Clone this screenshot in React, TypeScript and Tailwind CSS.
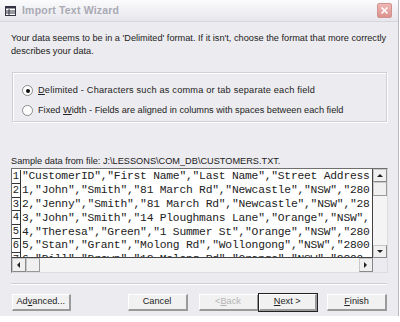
import React from 'react';

const rows = [
  '"CustomerID","First Name","Last Name","Street Address',
  '1,"John","Smith","81 March Rd","Newcastle","NSW","280',
  '2,"Jenny","Smith","81 March Rd","Newcastle","NSW","28',
  '3,"John","Smith","14 Ploughmans Lane","Orange","NSW",',
  '4,"Theresa","Green","1 Summer St","Orange","NSW","280',
  '5,"Stan","Grant","Molong Rd","Wollongong","NSW","2800',
  '6,"Bill","Brown","12 Molong Rd","Orange","NSW","2800',
];

function Radio({ checked }: { checked?: boolean }) {
  return (
    <span className="w-[11px] h-[11px] rounded-full border border-[#8a8a8a] bg-white flex items-center justify-center shrink-0">
      {checked && <span className="w-[4px] h-[4px] rounded-full bg-[#111]" />}
    </span>
  );
}

function Btn({ children, def, disabled }: { children: React.ReactNode; def?: boolean; disabled?: boolean }) {
  return (
    <div
      className={
        'w-[60px] h-[17px] flex items-center justify-center bg-[#f1f1f1] border-t border-l border-t-white border-l-white border-r-2 border-b-2 border-r-[#9a9a9a] border-b-[#9a9a9a] ' +
        (def ? 'outline outline-1 outline-[#222] ' : '') +
        (disabled ? 'text-[#b4b4b4]' : 'text-[#222]')
      }
    >
      {children}
    </div>
  );
}

function Arrow({ dir }: { dir: 'up' | 'down' | 'left' | 'right' }) {
  const pts = {
    up: '1,5 4,2 7,5',
    down: '1,2 4,5 7,2',
    left: '5,1 2,4 5,7',
    right: '2,1 5,4 2,7',
  }[dir];
  return (
    <svg width="8" height="8" viewBox="0 0 8 8">
      <polygon points={pts} fill="#222" />
    </svg>
  );
}

export default function App() {
  return (
    <div className="w-[400px] h-[322px] bg-white overflow-hidden" style={{ fontFamily: '"Liberation Sans", Arial, sans-serif' }}>
      <div className="w-[399px] h-[316px] bg-[#ecebef] border-r border-[#b8b8c0] flex flex-col">
        {/* title bar */}
        <div className="h-[22px] flex items-center pl-[5px] pr-[6px] bg-gradient-to-b from-[#fbfbfd] to-[#e6e6ec] border-b border-[#d6d6de]">
          <svg width="11" height="10" viewBox="0 0 11 10" className="mr-[6px]">
            <rect x="0.5" y="0.5" width="10" height="9" fill="#fff" stroke="#334" />
            <rect x="0.5" y="0.5" width="10" height="2" fill="#334" />
            <line x1="4" y1="3" x2="4" y2="9" stroke="#334" />
            <line x1="1" y1="5" x2="10" y2="5" stroke="#334" />
            <line x1="1" y1="7" x2="10" y2="7" stroke="#334" />
          </svg>
          <span className="text-[10.5px] font-bold text-[#a9a9b3] tracking-[0.2px]">Import Text Wizard</span>
          <div className="ml-auto w-[15px] h-[15px] rounded-[2px] bg-gradient-to-b from-[#efb8b6] to-[#dc918d] border border-[#d09390] flex items-center justify-center">
            <svg width="9" height="9" viewBox="0 0 9 9">
              <path d="M1.5 1.5 L7.5 7.5 M7.5 1.5 L1.5 7.5" stroke="#fff" strokeWidth="1.7" />
            </svg>
          </div>
        </div>

        <div className="flex-1 px-[11px] text-[9.2px] text-[#222] flex flex-col">
          <p className="mt-[10px] leading-[12.5px]">
            Your data seems to be in a 'Delimited' format. If it isn't, choose the format that more correctly describes your data.
          </p>

          {/* format group */}
          <div className="mt-[15px] ml-[1px] h-[50px] border border-[#cfcfd4] shadow-[inset_1px_1px_0_#fff,1px_1px_0_#fff] flex flex-col pl-[9px] pt-[11px] gap-[6px]">
            <div className="flex items-center gap-[5px]">
              <Radio checked />
              <span className="tracking-[0.2px]"><u>D</u>elimited - Characters such as comma or tab separate each field</span>
            </div>
            <div className="flex items-center gap-[5px]">
              <Radio />
              <span>Fixed <u>W</u>idth - Fields are aligned in columns with spaces between each field</span>
            </div>
          </div>

          <div className="mt-[33px] leading-[12px]">Sample data from file: J:\LESSONS\COM_DB\CUSTOMERS.TXT.</div>

          {/* data preview */}
          <div className="mt-[1px] w-[377px] h-[105px] border border-[#6f6f6f] border-r-[#dcdcdc] border-b-[#dcdcdc] grid grid-cols-[1fr_14px] grid-rows-[1fr_14px]">
            <div className="bg-white overflow-hidden border-r border-b border-[#444] pt-[1px]" style={{ fontFamily: '"Liberation Mono", "Courier New", monospace' }}>
              {rows.map((r, i) => (
                <div key={i} className="flex h-[13.8px] items-center text-[11.3px] leading-[13px] text-[#222]">
                  <span className="w-[9px] h-full shrink-0 border-r border-b border-[#333] flex items-center justify-center text-[10.5px]">{i + 1}</span>
                  <span className="whitespace-pre pl-[1px] tracking-[-0.22px]">{r}</span>
                </div>
              ))}
            </div>
            <div className="bg-[#f4f4f4] flex flex-col justify-between">
              <div className="h-[13px] bg-[#f0f0f0] border border-[#c8c8c8] border-r-[#888] border-b-[#888] flex items-center justify-center"><Arrow dir="up" /></div>
              <div className="h-[14px] mb-auto bg-[#f0f0f0] border border-[#c8c8c8] border-r-[#999] border-b-[#999]" />
              <div className="h-[13px] bg-[#f0f0f0] border border-[#c8c8c8] border-r-[#888] border-b-[#888] flex items-center justify-center"><Arrow dir="down" /></div>
            </div>
            <div className="bg-[#f4f4f4] flex">
              <div className="w-[14px] bg-[#f0f0f0] border border-[#c8c8c8] border-r-[#888] border-b-[#888] flex items-center justify-center"><Arrow dir="left" /></div>
              <div className="w-[14px] bg-[#f0f0f0] border border-[#c8c8c8] border-r-[#999] border-b-[#999]" />
              <div className="ml-auto w-[14px] bg-[#f0f0f0] border border-[#c8c8c8] border-r-[#888] border-b-[#888] flex items-center justify-center"><Arrow dir="right" /></div>
            </div>
            <div className="bg-[#ecebef]" />
          </div>

          <div className="mt-[10px] h-[2px] border-t border-[#cdcdd2] border-b border-b-white" />

          <div className="mt-[9px] flex items-center ml-[1px]">
            <Btn>Ad<u>v</u>anced...</Btn>
            <div className="ml-[57px]"><Btn>Cancel</Btn></div>
            <div className="ml-[11px]"><Btn disabled>&lt; <u>B</u>ack</Btn></div>
            <Btn def><u>N</u>ext &gt;</Btn>
            <div className="ml-[10px]"><Btn><u>F</u>inish</Btn></div>
          </div>
        </div>
      </div>
    </div>
  );
}
